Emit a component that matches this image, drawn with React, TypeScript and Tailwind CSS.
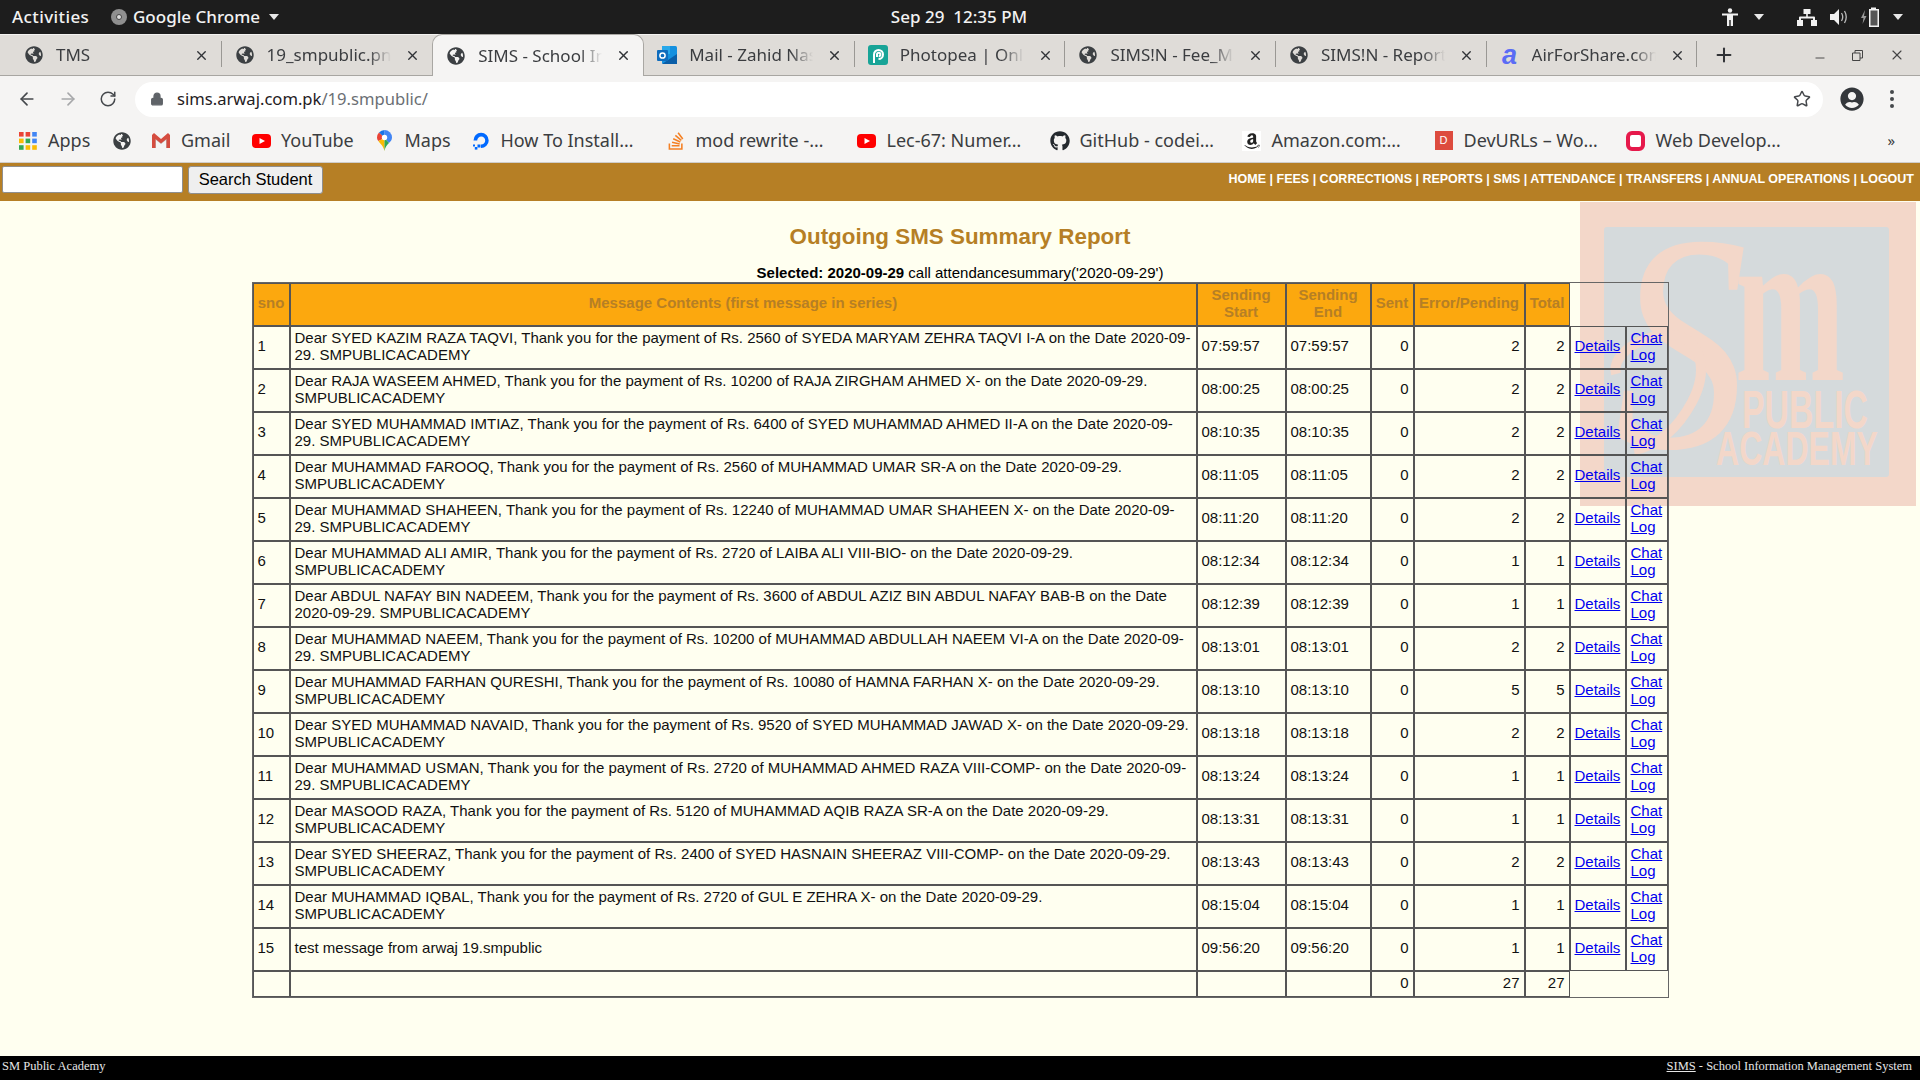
import { ReactNode } from 'react';
import { ArrowLeft, ArrowRight, Lock, Minus, Plus, RotateCw, Star, X } from 'lucide-react';
import { FaAmazon, FaGithub, FaGlobeAmericas, FaStackOverflow, FaUserCircle } from 'react-icons/fa';

const UI_FONT = "font-['Noto_Sans',sans-serif]";

// ---- little favicons ----
const Globe = () => <FaGlobeAmericas size={18} className="text-[#3c4043]" />;

const YouTubeIcon = () => (
    <svg width="19" height="14" viewBox="0 0 19 14">
        <rect width="19" height="14" rx="4" fill="#f00" />
        <path d="M7.5 4 L13 7 L7.5 10 Z" fill="#fff" />
    </svg>
);

const AppsIcon = () => (
    <svg width="18" height="18" viewBox="0 0 18 18">
        {[
            '#ea4335', '#ea4335', '#4285f4',
            '#fbbc04', '#34a853', '#4285f4',
            '#34a853', '#fbbc04', '#fbbc04',
        ].map((c, i) => (
            <rect key={i} x={(i % 3) * 6.6} y={Math.floor(i / 3) * 6.6} width="4.6" height="4.6" fill={c} />
        ))}
    </svg>
);

const GmailIcon = () => (
    <svg width="18" height="15" viewBox="0 0 18 15">
        <path d="M1 15 V2 L9 8.5 L17 2 V15 H14 V7 L9 11 L4 7 V15 Z" fill="#bdbdbd" />
        <path d="M0 2 L2 0 L9 6 L16 0 L18 2 V15 H14.5 V6 L9 10.5 L3.5 6 V15 H0 Z" fill="#d54c3f" />
    </svg>
);

const MapsIcon = () => (
    <svg width="15" height="21" viewBox="0 0 15 21">
        <path d="M7.5 0 A7.5 7.5 0 0 1 15 7.5 C15 10 13.5 11.5 12 13 L7.5 8 Z" fill="#4285f4" />
        <path d="M7.5 0 A7.5 7.5 0 0 0 2 2.5 L7.5 8 Z" fill="#1a73e8" />
        <path d="M2 2.5 A7.5 7.5 0 0 0 0 7.5 C0 9 .6 10 1.4 11 L7.5 8 Z" fill="#ea4335" />
        <path d="M1.4 11 C3 13.5 6.5 16 7.5 21 L7.5 8 Z" fill="#fbbc04" />
        <path d="M12 13 C10 15 8.2 17 7.5 21 L7.5 8 Z" fill="#34a853" />
        <circle cx="7.5" cy="7.5" r="2.7" fill="#fff" />
    </svg>
);

const DoIcon = () => (
    <svg width="20" height="20" viewBox="0 0 20 20">
        <path d="M10 17 V13.5 A4 4 0 1 0 6.2 9.5 H2.5 A7.6 7.6 0 1 1 10 17 Z" fill="#0069ff" />
        <rect x="6.5" y="13.5" width="3" height="3" fill="#0069ff" />
        <rect x="3.8" y="16" width="2.6" height="2.6" fill="#0069ff" />
        <rect x="2" y="13.5" width="2" height="2" fill="#0069ff" />
    </svg>
);

const AmazonIcon = () => (
    <span className="flex h-[20px] w-[19px] items-center justify-center bg-white">
        <FaAmazon size={18} className="text-[#222]" />
    </span>
);

const DevUrlsIcon = () => (
    <span className="flex h-[19px] w-[18px] items-center justify-center bg-[#dd4b3e] font-['Liberation_Sans',sans-serif] text-[11px] text-white">
        D
    </span>
);

const WebDevIcon = () => (
    <span className="block h-[20px] w-[19px] rounded-[6px] border-[4px] border-[#e6194b] bg-white" />
);

const OutlookIcon = () => (
    <svg width="20" height="18" viewBox="0 0 20 18">
        <rect x="5" y="0" width="15" height="18" rx="1.5" fill="#1490df" />
        <rect x="5" y="0" width="8" height="8" fill="#28a8ea" />
        <path d="M5 18 L20 8 V18 Z" fill="#0a5ea8" />
        <rect x="0" y="4" width="11" height="11" rx="1" fill="#0f6cbd" />
        <circle cx="5.5" cy="9.5" r="2.6" fill="none" stroke="#fff" strokeWidth="1.5" />
    </svg>
);

const PhotopeaIcon = () => (
    <svg width="20" height="20" viewBox="0 0 20 20">
        <rect width="20" height="20" rx="3" fill="#18a497" />
        <path d="M6 18 V9.5 A4.5 4.5 0 1 1 10.5 14 M9 12 V9.5 A1.7 1.7 0 1 1 10.7 11.2" fill="none" stroke="#fff" strokeWidth="2" />
    </svg>
);

const AirForShareIcon = () => (
    <span className="font-['Liberation_Sans',sans-serif] text-[27px] font-bold italic leading-[20px] text-[#5a6cf5]">a</span>
);

// ---- browser chrome ----
interface TabInfo {
    title: string;
    icon: ReactNode;
    active?: boolean;
    noSep?: boolean;
}

const tabs: TabInfo[] = [
    { title: 'TMS', icon: <Globe /> },
    { title: '19_smpublic.png', icon: <Globe />, noSep: true },
    { title: 'SIMS - School Information', icon: <Globe />, active: true, noSep: true },
    { title: 'Mail - Zahid Nasir', icon: <OutlookIcon /> },
    { title: 'Photopea | Online Photo', icon: <PhotopeaIcon /> },
    { title: 'SIMS!N - Fee_Management', icon: <Globe /> },
    { title: 'SIMS!N - Reports and', icon: <Globe /> },
    { title: 'AirForShare.com - Share', icon: <AirForShareIcon /> },
];

function Tab({ title, icon, active, noSep }: TabInfo) {
    return (
        <div
            className={`relative flex h-[42px] shrink-0 items-center ${
                active ? 'z-10 w-[212px] rounded-t-[10px] border-x border-t border-[#a9a7a3] bg-[#f5f4f3]' : 'w-[210.6px]'
            }`}
        >
            <span className="flex w-[46px] shrink-0 justify-center">{icon}</span>
            <span className="-ml-[1px] w-[124px] overflow-hidden whitespace-nowrap text-[17px] text-[#3b3d40] [mask-image:linear-gradient(to_right,black_82%,transparent)]">
                {title}
            </span>
            <X size={15} strokeWidth={2.2} className="ml-[14px] shrink-0 text-[#303236]" />
            {!noSep && !active && <span className="absolute right-0 top-[7px] h-[26px] w-px bg-[#9a9894]" />}
        </div>
    );
}

function TopBar() {
    return (
        <div className={`flex h-[34px] shrink-0 items-center bg-[#1d1d1d] text-[17px] font-medium text-[#f2f2f2] ${UI_FONT}`}>
            <span className="ml-[12px] w-[99px] tracking-[0.4px]">Activities</span>
            <span className="flex h-[16px] w-[16px] items-center justify-center rounded-full bg-[#8f8f8f]">
                <span className="h-[6px] w-[6px] rounded-full border border-[#444] bg-[#ddd]" />
            </span>
            <span className="ml-[6px] w-[136px]">Google Chrome</span>
            <span className="h-0 w-0 border-x-[5.5px] border-t-[6px] border-x-transparent border-t-[#e8e8e8]" />
            <span className="ml-[601px] w-[158px] whitespace-pre text-center">Sep 29  12:35 PM</span>
            <div className="ml-auto flex items-center text-[#f2f2f2]">
                <svg width="16" height="18" viewBox="0 0 16 18" className="mr-[16px]">
                    <circle cx="8" cy="2.5" r="2.2" fill="currentColor" />
                    <path d="M0 5.5 H16 V7.5 H11 V11 L11 18 H8.7 V12 H7.3 V18 H5 V7.5 H0 Z" fill="currentColor" />
                </svg>
                <span className="mr-[33px] h-0 w-0 border-x-[5.5px] border-t-[6px] border-x-transparent border-t-[#e8e8e8]" />
                <svg width="20" height="17" viewBox="0 0 20 17" className="mr-[13px]">
                    <path d="M6.5 0 H13.5 V5 H10.8 V7.5 H17 Q18 7.5 18 8.5 V11 H20 V17 H14 V11 H16 V9.5 H4 V11 H6 V17 H0 V11 H2 V8.5 Q2 7.5 3 7.5 H9.2 V5 H6.5 Z" fill="currentColor" />
                </svg>
                <svg width="19" height="16" viewBox="0 0 19 16" className="mr-[12px]">
                    <path d="M0 5 H4 L9 0 V16 L4 11 H0 Z" fill="currentColor" />
                    <path d="M11.5 4 Q14 8 11.5 12 M14.5 2 Q18 8 14.5 14" fill="none" stroke="currentColor" strokeWidth="1.3" opacity=".75" />
                </svg>
                <svg width="19" height="20" viewBox="0 0 19 20" className="mr-[13px]">
                    <path d="M4 3 L0 11 H2.5 L1.5 17 L5.5 9 H3 Z" fill="#9a9a9a" />
                    <path d="M10 2 V.5 H15 V2 H18 V20 H8 V2 Z" fill="currentColor" />
                    <rect x="9.5" y="3.5" width="7" height="15" fill="#555" />
                </svg>
                <span className="mr-[17px] h-0 w-0 border-x-[5.5px] border-t-[6px] border-x-transparent border-t-[#e8e8e8]" />
            </div>
        </div>
    );
}

function TabStrip() {
    return (
        <div className={`flex h-[42px] shrink-0 items-center border-y border-t-[#f3f2f0] border-b-[#a8a6a2] bg-[#dfdcd8] pl-[11px] ${UI_FONT}`}>
            {tabs.map((t) => (
                <Tab key={t.title} {...t} />
            ))}
            <Plus size={22} strokeWidth={2.2} className="ml-[16px] text-[#303236]" />
            <div className="ml-auto flex items-center text-[#444]">
                <Minus size={14} strokeWidth={1.6} className="mr-[25px] mt-[6px]" />
                <svg width="11" height="11" viewBox="0 0 11 11" className="mr-[26px]">
                    <path d="M.5 3 H8 V10.5 H.5 Z M3 3 V.5 H10.5 V8 H8" fill="none" stroke="currentColor" />
                </svg>
                <X size={16} strokeWidth={1.7} className="mr-[15px]" />
            </div>
        </div>
    );
}

function Toolbar() {
    return (
        <div className={`flex h-[46px] shrink-0 items-center bg-[#f5f4f3] ${UI_FONT}`}>
            <ArrowLeft size={20} strokeWidth={2} className="ml-[17px] text-[#45484c]" />
            <ArrowRight size={20} strokeWidth={2} className="ml-[21px] text-[#a7a8aa]" />
            <RotateCw size={18} strokeWidth={2} className="ml-[21px] text-[#45484c]" />
            <div className="ml-[18px] flex h-[35px] w-[1688px] items-center rounded-full bg-white">
                <Lock size={14} strokeWidth={2.4} fill="#5f6368" className="ml-[15px] text-[#5f6368]" />
                <span className="ml-[13px] text-[16.6px] text-[#1f2023]">
                    sims.arwaj.com.pk<span className="text-[#6b6f74]">/19.smpublic/</span>
                </span>
                <Star size={18} strokeWidth={2} className="ml-auto mr-[12px] text-[#45484c]" />
            </div>
            <FaUserCircle size={24} className="ml-[17px] text-[#34373b]" />
            <div className="ml-[26px] flex flex-col gap-[3px]">
                <span className="h-[4px] w-[4px] rounded-full bg-[#45484c]" />
                <span className="h-[4px] w-[4px] rounded-full bg-[#45484c]" />
                <span className="h-[4px] w-[4px] rounded-full bg-[#45484c]" />
            </div>
        </div>
    );
}

function Bookmark({ icon, label, className }: { icon: ReactNode; label?: string; className: string }) {
    return (
        <div className={`flex shrink-0 items-center ${className}`}>
            <span className="flex w-[20px] justify-center">{icon}</span>
            {label && <span className="ml-[10px] whitespace-nowrap text-[18px] text-[#3b3d40]">{label}</span>}
        </div>
    );
}

function BookmarksBar() {
    return (
        <div className={`flex h-[41px] shrink-0 items-center border-b border-[#cfcdca] bg-[#f5f4f3] pb-[3px] pl-[18px] ${UI_FONT}`}>
            <Bookmark icon={<AppsIcon />} label="Apps" className="w-[94px]" />
            <Bookmark icon={<Globe />} className="w-[39px]" />
            <Bookmark icon={<GmailIcon />} label="Gmail" className="w-[100px]" />
            <Bookmark icon={<YouTubeIcon />} label="YouTube" className="w-[123.5px]" />
            <Bookmark icon={<MapsIcon />} label="Maps" className="w-[96px]" />
            <Bookmark icon={<DoIcon />} label="How To Install…" className="w-[195px]" />
            <Bookmark icon={<FaStackOverflow size={20} className="text-[#f48024]" />} label="mod rewrite -…" className="w-[191px]" />
            <Bookmark icon={<YouTubeIcon />} label="Lec-67: Numer…" className="w-[193px]" />
            <Bookmark icon={<FaGithub size={20} className="text-[#24292e]" />} label="GitHub - codei…" className="w-[192px]" />
            <Bookmark icon={<AmazonIcon />} label="Amazon.com:…" className="w-[192px]" />
            <Bookmark icon={<DevUrlsIcon />} label="DevURLs – Wo…" className="w-[192px]" />
            <Bookmark icon={<WebDevIcon />} label="Web Develop…" className="w-[262px]" />
            <span className="text-[15px] text-[#3b3d40]">»</span>
        </div>
    );
}

// ---- page ----
const navLinks = ['HOME', 'FEES', 'CORRECTIONS', 'REPORTS', 'SMS', 'ATTENDANCE', 'TRANSFERS', 'ANNUAL OPERATIONS', 'LOGOUT'];

function SearchBar() {
    return (
        <div className="flex h-[38px] shrink-0 items-center bg-[#b67f25] pb-[5px] font-['Liberation_Sans',sans-serif]">
            <input type="text" className="ml-[2px] h-[27px] w-[181px] rounded-[2px] border border-[#8f8f8f] bg-white" />
            <button className="ml-[5px] h-[28px] w-[135px] rounded-[3px] border border-[#8f8f8f] bg-[#efefef] text-[16.5px] text-black">
                Search Student
            </button>
            <div className="ml-auto mr-[6px] whitespace-pre text-[12.5px] font-bold text-white">{navLinks.join(' | ')}</div>
        </div>
    );
}

function Watermark() {
    return (
        <svg width="336" height="304" viewBox="0 0 336 304" className="absolute right-[4px] top-[1px]">
            <rect width="336" height="304" fill="#f3d7c9" />
            <rect x="24" y="25" width="285" height="250" rx="3" fill="#d5dadc" />
            <text x="34" y="245" fontFamily="Liberation Serif" fontStyle="italic" fontSize="310" fill="#f3d7c9" textLength="134" lengthAdjust="spacingAndGlyphs">S</text>
            <path d="M36 172 C30 150 70 128 98 134 C122 140 128 170 112 200 C98 226 78 244 54 248" fill="none" stroke="#f3d7c9" strokeWidth="10" />
            <text x="155" y="178" fontFamily="Liberation Serif" fontWeight="bold" fontSize="225" fill="#f3d7c9" textLength="110" lengthAdjust="spacingAndGlyphs">m</text>
            <text x="162" y="226" fontFamily="Liberation Sans" fontWeight="bold" fontSize="53" fill="#f3d7c9" textLength="126" lengthAdjust="spacingAndGlyphs">PUBLIC</text>
            <text x="136" y="263" fontFamily="Liberation Sans" fontWeight="bold" fontSize="49" fill="#f3d7c9" textLength="162" lengthAdjust="spacingAndGlyphs">ACADEMY</text>
        </svg>
    );
}

interface Row {
    sno: number;
    text: string;
    time: string;
    err: number;
}

const msg = (who: string, rs: string, student: string) =>
    `Dear ${who}, Thank you for the payment of Rs. ${rs} of ${student} on the Date 2020-09-29. SMPUBLICACADEMY`;

const rows: Row[] = [
    { sno: 1, text: msg('SYED KAZIM RAZA TAQVI', '2560', 'SYEDA MARYAM ZEHRA TAQVI I-A'), time: '07:59:57', err: 2 },
    { sno: 2, text: msg('RAJA WASEEM AHMED', '10200', 'RAJA ZIRGHAM AHMED X-'), time: '08:00:25', err: 2 },
    { sno: 3, text: msg('SYED MUHAMMAD IMTIAZ', '6400', 'SYED MUHAMMAD AHMED II-A'), time: '08:10:35', err: 2 },
    { sno: 4, text: msg('MUHAMMAD FAROOQ', '2560', 'MUHAMMAD UMAR SR-A'), time: '08:11:05', err: 2 },
    { sno: 5, text: msg('MUHAMMAD SHAHEEN', '12240', 'MUHAMMAD UMAR SHAHEEN X-'), time: '08:11:20', err: 2 },
    { sno: 6, text: msg('MUHAMMAD ALI AMIR', '2720', 'LAIBA ALI VIII-BIO-'), time: '08:12:34', err: 1 },
    { sno: 7, text: msg('ABDUL NAFAY BIN NADEEM', '3600', 'ABDUL AZIZ BIN ABDUL NAFAY BAB-B'), time: '08:12:39', err: 1 },
    { sno: 8, text: msg('MUHAMMAD NAEEM', '10200', 'MUHAMMAD ABDULLAH NAEEM VI-A'), time: '08:13:01', err: 2 },
    { sno: 9, text: msg('MUHAMMAD FARHAN QURESHI', '10080', 'HAMNA FARHAN X-'), time: '08:13:10', err: 5 },
    { sno: 10, text: msg('SYED MUHAMMAD NAVAID', '9520', 'SYED MUHAMMAD JAWAD X-'), time: '08:13:18', err: 2 },
    { sno: 11, text: msg('MUHAMMAD USMAN', '2720', 'MUHAMMAD AHMED RAZA VIII-COMP-'), time: '08:13:24', err: 1 },
    { sno: 12, text: msg('MASOOD RAZA', '5120', 'MUHAMMAD AQIB RAZA SR-A'), time: '08:13:31', err: 1 },
    { sno: 13, text: msg('SYED SHEERAZ', '2400', 'SYED HASNAIN SHEERAZ VIII-COMP-'), time: '08:13:43', err: 2 },
    { sno: 14, text: msg('MUHAMMAD IQBAL', '2720', 'GUL E ZEHRA X-'), time: '08:15:04', err: 1 },
    { sno: 15, text: 'test message from arwaj 19.smpublic', time: '09:56:20', err: 1 },
];

const TD = 'border border-[#555] pl-[4px] pr-[4px] pb-[4px] align-middle';
const TH = 'border border-[#555] bg-[#fca80e] px-[1px] pb-[4px] align-middle font-bold text-[#b67f25]';
const LINK = 'text-[#0000ee] underline';

function SummaryTable() {
    return (
        <table className="relative mx-auto w-[1417px] table-fixed border-separate border-spacing-0 border border-[#666] text-[15px] leading-[17px] text-[#111]">
            <colgroup>
                <col className="w-[37px]" />
                <col className="w-[907px]" />
                <col className="w-[89px]" />
                <col className="w-[85px]" />
                <col className="w-[43px]" />
                <col className="w-[111px]" />
                <col className="w-[45px]" />
                <col className="w-[56px]" />
                <col className="w-[42px]" />
            </colgroup>
            <thead>
                <tr className="h-[43px]">
                    <th className={TH}>sno</th>
                    <th className={TH}>Message Contents (first message in series)</th>
                    <th className={TH}>Sending Start</th>
                    <th className={TH}>Sending End</th>
                    <th className={TH}>Sent</th>
                    <th className={TH}>Error/Pending</th>
                    <th className={TH}>Total</th>
                    <th colSpan={2} />
                </tr>
            </thead>
            <tbody>
                {rows.map((r) => (
                    <tr key={r.sno} className="h-[43px]">
                        <td className={TD}>{r.sno}</td>
                        <td className={TD}>{r.text}</td>
                        <td className={TD}>{r.time}</td>
                        <td className={TD}>{r.time}</td>
                        <td className={`${TD} text-right`}>0</td>
                        <td className={`${TD} text-right`}>{r.err}</td>
                        <td className={`${TD} text-right`}>{r.err}</td>
                        <td className={TD}><a href="#" className={LINK}>Details</a></td>
                        <td className={TD}><a href="#" className={LINK}>Chat Log</a></td>
                    </tr>
                ))}
                <tr className="h-[26px]">
                    <td className={TD} />
                    <td className={TD} />
                    <td className={TD} />
                    <td className={TD} />
                    <td className={`${TD} text-right`}>0</td>
                    <td className={`${TD} text-right`}>27</td>
                    <td className={`${TD} text-right`}>27</td>
                    <td colSpan={2} />
                </tr>
            </tbody>
        </table>
    );
}

export default function App() {
    return (
        <div className="flex h-screen flex-col overflow-hidden bg-[#fffff0]">
            <TopBar />
            <TabStrip />
            <Toolbar />
            <BookmarksBar />
            <SearchBar />
            <main className="relative flex-1 font-['Liberation_Sans',sans-serif]">
                <Watermark />
                <h1 className="relative pt-[22px] text-center text-[22.4px] font-bold leading-[28px] text-[#b67f25]">
                    Outgoing SMS Summary Report
                </h1>
                <p className="relative mt-[12px] text-center text-[15px] leading-[19px] text-black">
                    <b>Selected: 2020-09-29</b> call attendancesummary('2020-09-29')
                </p>
                <SummaryTable />
            </main>
            <footer className="flex h-[24px] shrink-0 items-center justify-between bg-black px-[2px] pb-[4px] font-['Liberation_Serif',serif] text-[12.5px] text-[#e6e6e6]">
                <span>SM Public Academy</span>
                <span className="mr-[6px]"><span className="underline">SIMS</span> - School Information Management System</span>
            </footer>
        </div>
    );
}
